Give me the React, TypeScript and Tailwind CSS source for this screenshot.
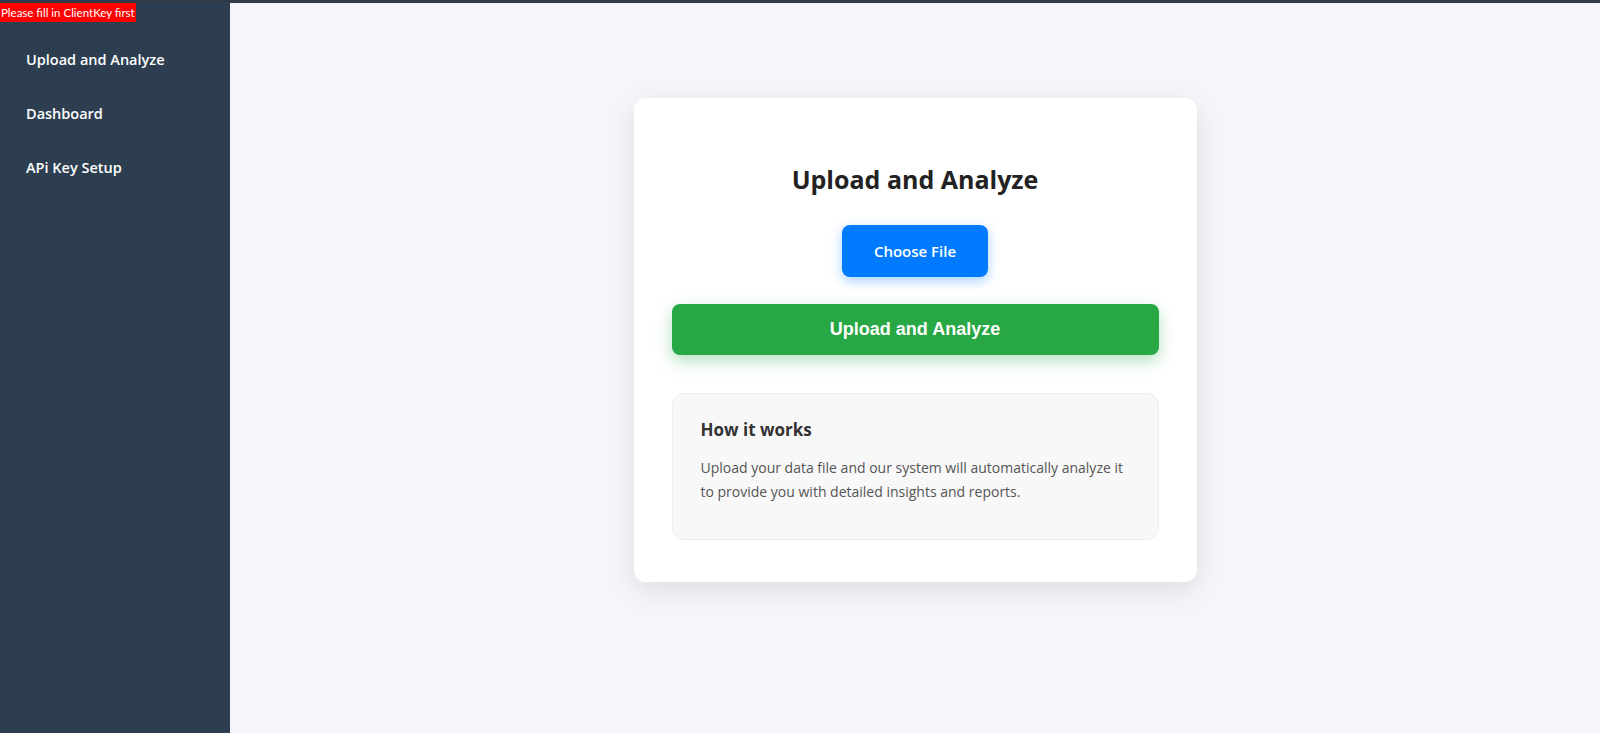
import React from "react";

const navItems = ["Upload and Analyze", "Dashboard", "APi Key Setup"];

export default function App() {
  return (
    <div className="relative flex h-[733px] w-full flex-col overflow-hidden bg-[#f4f6f9] font-['Open_Sans',sans-serif]">
      <div className="h-[3px] w-full shrink-0 bg-[#2f3b48]" />
      <div className="flex flex-1">
        <aside className="w-[230px] shrink-0 bg-[#2c3e50] pt-[47px]">
          <nav className="flex flex-col gap-[34px] pl-[26px]">
            {navItems.map((item) => (
              <a key={item} href="#" className="text-[14.5px] font-semibold leading-[20px] text-white">
                {item}
              </a>
            ))}
          </nav>
        </aside>

        <main className="flex flex-1 justify-center pt-[95px]">
          <div className="flex h-[484px] w-[563px] flex-col items-center rounded-xl bg-white px-[38px] pt-[65px] shadow-[0_8px_28px_rgba(0,0,0,0.1)]">
            <h2 className="text-[25px] font-bold leading-[32px] text-[#222]">Upload and Analyze</h2>
            <button className="mt-[30px] h-[52px] w-[146px] rounded-lg bg-[#007bff] text-[15px] font-semibold text-white shadow-[0_4px_12px_rgba(0,123,255,0.35)]">
              Choose File
            </button>
            <button className="mt-[27px] h-[51px] w-full rounded-lg bg-[#28a745] font-['Liberation_Sans',Arial,sans-serif] text-[18px] font-bold text-white shadow-[0_6px_16px_rgba(40,167,69,0.35)]">
              Upload and Analyze
            </button>
            <div className="mt-[38px] h-[147px] w-full rounded-xl border border-[#eeeeee] bg-[#f8f8f9] px-[28px] pt-[24px]">
              <h3 className="text-[17px] font-bold leading-[24px] text-[#333]">How it works</h3>
              <p className="mt-[14px] text-[14px] leading-[24px] text-[#555]">
                Upload your data file and our system will automatically analyze it to provide you with detailed insights and reports.
              </p>
            </div>
          </div>
        </main>
      </div>

      <div className="absolute left-0 top-[3px] bg-[#ff0000] px-[1px] font-['Lato',sans-serif] text-[11.5px] leading-[19px] text-white">
        Please fill in ClientKey first
      </div>
    </div>
  );
}
